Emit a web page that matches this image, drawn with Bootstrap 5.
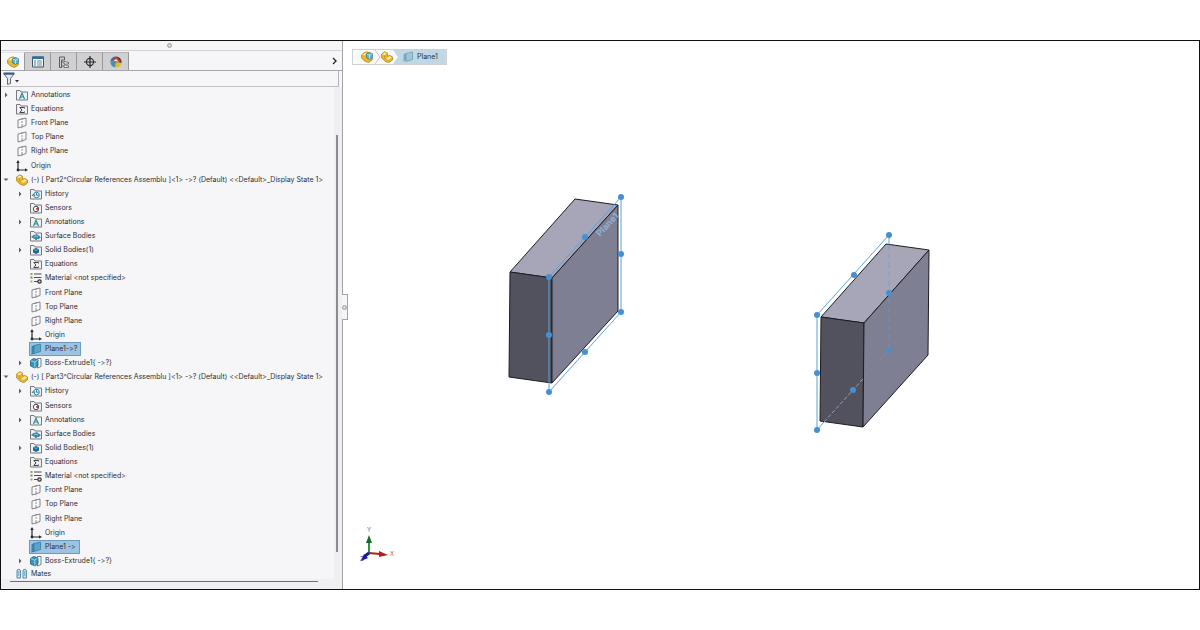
<!DOCTYPE html>
<html lang="en">
<head>
<meta charset="utf-8">
<meta name="viewport" content="width=device-width, initial-scale=1">
<title>Circular References Assembly</title>
<link href="https://cdn.jsdelivr.net/npm/bootstrap@5.3.0/dist/css/bootstrap.min.css" rel="stylesheet">
<style>
  body { font-family: Inter, "Open Sans", sans-serif; font-size: 7px; font-variant-ligatures: none; line-height: 12px; color: #2c2c30; background: #fff; }
  button { font: inherit; color: inherit; }
  .page { min-height: 100vh; padding: 40px 0; }
  .frame { border: 1px solid #111; }
  .side { width: 342px; background: #f6f6f8; border-right: 1px solid #a4a4a8; }
  .grip { height: 10px; padding-right: 4px; border-bottom: 1px solid #d2d2d4; }
  .knob { width: 5px; height: 5px; border: 1px solid #a0a0a4; background: #d6d6da; }
  .tabs { height: 20px; border-bottom: 1px solid #a8a8ac; }
  .tab { width: 26px; height: 18px; background: #d0d0d2; border: 0; border-right: 1px solid #98989c; border-top: 1px solid #b4b4b8; }
  .tab-on { width: 24px; background: #f8f8fa; border-top-color: #e4e4e6; }
  .more { width: 11px; height: 18px; }
  .filter { height: 16px; margin-right: 3px; border-bottom: 1px solid #c2c2c6; border-right: 1px solid #b4b4b8; }
  .filter input { height: 14px; outline: 0; }
  .track { width: 8px; background: #efeff1; padding: 48px 0 27px; }
  .thumb { width: 2px; background: #8c8c90; margin-left: 2px; }
  .tree { padding-top: 1px; }
  .tree li { white-space: nowrap; }
  .twist { width: 11px; height: 12px; margin-right: 4px; }
  .kid { padding-left: 14px; }
  .ico { width: 12px; height: 12px; flex: none; }
  .name { padding-left: 3px; }
  .picked { background: #9cc4e2; box-shadow: 0 0 0 1px #6c9cc0; padding-right: 3px; }
  .mates { height: 11px; }
  .hbar { height: 10px; background: #f0f0f2; padding: 2px 24px 0 9px; }
  .hbar div { height: 1px; background: #6e6e72; }
  .scene { min-width: 0; }
  .handle { left: -1px; top: 253px; width: 6px; height: 26px; background: #f6f6f8; border: 1px solid #a4a4a8; border-left: 0; }
  .crumbs { left: 9px; top: 8px; height: 16px; border: 1px solid #cfd2d4; background: #fafafa; }
  .crumbs a { color: #26343e; }
  .here { background: #c0d8e5; padding: 0 8px 0 9px; clip-path: polygon(0 0, 100% 0, 100% 100%, 0 100%, 5px 50%); }
  .ln { fill: none; stroke: #59a2de; stroke-width: 1; }
  .edge { stroke: #1c1c24; stroke-width: 1; stroke-linejoin: round; }
  .dots { fill: #4590d2; }
</style>
</head>
<body>
<svg class="d-none" aria-hidden="true">
  <symbol id="folder" viewBox="0 0 12 12"><path d="M.5 11V1.500h3.500l1 1.500h6.500V11z" fill="#f0f1f3" stroke="#77797d"/></symbol>
  <symbol id="note" viewBox="0 0 12 12"><use href="#folder"/><path d="M3.500 10 6 4.300 8.500 10M4.500 8h3" fill="none" stroke="#2b8b9b" stroke-width="1.200"/></symbol>
  <symbol id="sum" viewBox="0 0 12 12"><use href="#folder"/><path d="M8.500 5.500V4.500H3.800L6 7 3.800 9.500h4.700v-1" fill="none" stroke="#444"/></symbol>
  <symbol id="hist" viewBox="0 0 12 12"><use href="#folder"/><circle cx="6.500" cy="7" r="2.800" fill="#e8f6fa" stroke="#2f8ba2"/><path d="M6.500 5v2.200h2M2 8l1.500-2L5 8" fill="none" stroke="#2f7b92"/></symbol>
  <symbol id="sens" viewBox="0 0 12 12"><use href="#folder"/><circle cx="6" cy="7" r="2.700" fill="#fff" stroke="#4c4c50"/><path d="M6 7l2-2v3z" fill="#d33" stroke="#b33" stroke-width=".6"/></symbol>
  <symbol id="surf" viewBox="0 0 12 12"><use href="#folder"/><path d="M1.500 7 4 5l1 .5L6.500 4l1.500 1.500L10.500 7 8.500 9l-1-.5L6 10 4.500 8.500z" fill="#3187ad" stroke="#206485" stroke-width=".5"/><path d="M4 7q2-2 4 0" fill="none" stroke="#c6e9f5" stroke-width=".7"/></symbol>
  <symbol id="solid" viewBox="0 0 12 12"><use href="#folder"/><path d="M6 4 9 5.200V8.500L6 10 3 8.500V5.200z" fill="#1c6a94"/><path d="M3.500 5.400 6 6.500l2.500-1.100" fill="none" stroke="#83cbe4" stroke-width=".7"/></symbol>
  <symbol id="plane" viewBox="0 0 12 12"><path d="M2 3 10 1v7.500L2 11z" fill="#fbfbfc" stroke="#77777b" stroke-width=".9"/><path d="M6 1v10" stroke="#77777b" stroke-width=".8" stroke-dasharray="2 1"/></symbol>
  <symbol id="planeblue" viewBox="0 0 12 12"><path d="M1.500 3.500 4 2v7l-2.500 2z" fill="#3a85ad"/><path d="M4 2.500 10.500 1v7.500L4 10.500z" fill="#5ba5cb" stroke="#397ca1" stroke-width=".8"/><path d="M1.500 11l2.500-.7" stroke="#356f91"/></symbol>
  <symbol id="planepale" viewBox="0 0 12 12"><path d="M1.500 3.500 4 2v7l-2.500 2z" fill="#7fa9bf"/><path d="M4 2.500 10.500 1v7.500L4 10.500z" fill="#a0c6da" stroke="#6e9ab2" stroke-width=".8"/></symbol>
  <symbol id="origin" viewBox="0 0 12 12"><path d="M2 1.500V10h8" fill="none" stroke="#2a2a2e" stroke-width="1.200"/><path d="M.3 3 2 0l1.700 3zM9 8.300l3 1.700-3 1.500z" fill="#2a2a2e"/><circle cx="2" cy="10" r="1.400" fill="#2a2a2e"/></symbol>
  <symbol id="mat" viewBox="0 0 12 12"><path d="M4 2h7.500M4 5.500h7.500M4 9.500h4" stroke="#4c4c50" stroke-width="1.100"/><path d="M.5 1h2v2h-2z" fill="#b49d2b"/><path d="M.5 4.500h2v2h-2z" fill="#4c8f9c"/><path d="M.5 8.500h2v2h-2z" fill="#c0a734"/><circle cx="9.500" cy="9.500" r="1.700" fill="#ddd" stroke="#333" stroke-width="1.200"/></symbol>
  <symbol id="part" viewBox="0 0 12 12"><path d="M.6 3 3.600.8 6.400 2v3L9 4.500l2.500 1.500v3L8 11.500 4.500 10.500.6 7z" fill="#e9b62d" stroke="#a57c16" stroke-width=".7"/><path d="M1.200 3.200 3.700 1.500 5.800 2.400 3.500 4.300zM5 7.700 8.800 5.200l2 1.100L7.800 8.700z" fill="#fdeaa6"/><path d="M3.500 4.300V7L5 8" fill="none" stroke="#b88b1c" stroke-width=".7"/></symbol>
  <symbol id="assy" viewBox="0 0 12 12"><path d="M.5 4 3 1.800l3-1 3 1.500v3L6 7l2 1 3.300-1v2L7.500 11.500 3.500 10 .5 7z" fill="#e9b62d" stroke="#a57c16" stroke-width=".7"/><path d="M1.300 4 3.500 2.200l2-.6L4 4.500z" fill="#fdeaa6"/><path d="M5.500 3 8.500 1.500l3 1.200v4L8.500 8.200l-3-1.400z" fill="#64b6cc" stroke="#2f788c" stroke-width=".7"/><path d="M5.800 3.200 8.500 4.200l2.700-1.300M8.500 4.200V8" fill="none" stroke="#d5f1f6" stroke-width=".7"/></symbol>
  <symbol id="boss" viewBox="0 0 12 12"><path d="M7.500 1.500h3.500v8l-3.500 1.500z" fill="#f5fafc" stroke="#55636c" stroke-width=".8"/><path d="M.5 3.500 3.500 1.500 8 2.800v6L5 11 .5 9z" fill="#3795b8" stroke="#20607e" stroke-width=".8"/><path d="M.8 3.800 4.800 5 7.700 3M4.800 5v5.500" fill="none" stroke="#a9e0ee" stroke-width=".8"/></symbol>
  <symbol id="matesico" viewBox="0 0 12 12"><path d="M1 10V3a1.700 1.700 0 0 1 3.400 0v7zM7 10V3a1.700 1.700 0 0 1 3.400 0v7z" fill="#d8ecf4" stroke="#4a87a5"/><path d="M2.700 3v5M8.700 3v5" stroke="#4a87a5" stroke-width=".7"/></symbol>
  <symbol id="shut" viewBox="0 0 11 12"><path d="M4 3.500 6.500 6 4 8.500z" fill="#5c5c60"/></symbol>
  <symbol id="open" viewBox="0 0 11 12"><path d="M2.500 4.500h5L5 7z" fill="#5c5c60"/></symbol>
</svg>

<div class="page d-flex">
 <div class="frame d-flex flex-fill">
  <aside class="side d-flex flex-column flex-shrink-0">
    <div class="grip d-flex justify-content-center align-items-center"><span class="knob rounded-circle"></span></div>
    <div class="tabs d-flex align-items-end">
      <button class="tab tab-on p-0 d-flex align-items-center justify-content-center" aria-label="Feature tree"><svg class="ico"><use href="#assy"/></svg></button>
      <button class="tab p-0 d-flex align-items-center justify-content-center" aria-label="Properties"><svg class="ico" viewBox="0 0 12 12"><path d="M.5 1h11v10H.5z" fill="#f4f8fa" stroke="#43535f"/><path d="M0 .5h12v2.500H0z" fill="#2c719a"/><path d="M2 5h2M2 7h2M2 9h2" stroke="#2c82ad" stroke-width="1.200"/><path d="M5 5h5M5 7h5M5 9h5" stroke="#7d8a93"/></svg></button>
      <button class="tab p-0 d-flex align-items-center justify-content-center" aria-label="Configurations"><svg class="ico" viewBox="0 0 12 12"><path d="M1.500 11.500V1h5v3h-3v7.500zM3.500 6h2M3.500 10h2" fill="none" stroke="#5b5b60"/><path d="M6 5.500h2l.5.700h2V8H6zM6 9h2l.5.700h2v1.800H6z" fill="#eee" stroke="#5b5b60" stroke-width=".8"/></svg></button>
      <button class="tab p-0 d-flex align-items-center justify-content-center" aria-label="Dimensions"><svg class="ico" viewBox="0 0 12 12"><circle cx="6" cy="6" r="3.600" fill="none" stroke="#2b2b2f" stroke-width="1.100"/><path d="M6 0v12M0 6h12" stroke="#2b2b2f" stroke-width="1.200"/></svg></button>
      <button class="tab p-0 d-flex align-items-center justify-content-center" aria-label="Appearance"><svg class="ico" viewBox="0 0 12 12"><path d="M6 6 .5 5A5.600 5.600 0 0 1 6 .4z" fill="#3f6f9f"/><path d="M6 6V.4A5.600 5.600 0 0 1 11.500 7z" fill="#3c3c40"/><path d="M6 6l5.500 1A5.600 5.600 0 0 1 5 11.500z" fill="#e3bd27"/><path d="M6 6 5 11.500A5.600 5.600 0 0 1 .5 5z" fill="#3f91b4"/><path d="M2.500 4.500 6.500.6l4.500 5L6 6.500z" fill="#d83a2b"/><path d="M3.500 5 6 3 8.500 5.500z" fill="#fbeee8"/></svg></button>
      <button class="more btn p-0 border-0 ms-auto d-flex align-items-center" aria-label="More tabs"><svg width="8" height="10" viewBox="0 0 8 10"><path d="M2 2l3 3-3 3" fill="none" stroke="#2c2c30" stroke-width="1.400"/></svg></button>
    </div>
    <div class="filter d-flex align-items-center">
      <label for="filter" class="d-flex" aria-label="Filter"><svg width="18" height="13" viewBox="0 0 18 13"><path d="M3 2h10L9.500 6.500v5l-3 1v-6z" fill="#dfe9ef" stroke="#5c6973"/><path d="M2.500 1.500h11" stroke="#2b5f80" stroke-width="2"/><path d="M14 8h4l-2 2.500z" fill="#333"/></svg></label>
      <input id="filter" type="text" class="flex-fill border-0 bg-transparent p-0">
    </div>
    <div class="d-flex flex-fill">
      <div class="d-flex flex-column flex-fill overflow-hidden">
      <ul class="tree list-unstyled m-0 d-grid flex-fill">
        <li class="d-flex align-items-center"><button class="twist btn p-0 border-0 d-flex" aria-label="Expand"><svg width="11" height="12"><use href="#shut"/></svg></button><svg class="ico"><use href="#note"/></svg><span class="name">Annotations</span></li>
        <li class="d-flex align-items-center"><span class="twist"></span><svg class="ico"><use href="#sum"/></svg><span class="name">Equations</span></li>
        <li class="d-flex align-items-center"><span class="twist"></span><svg class="ico"><use href="#plane"/></svg><span class="name">Front Plane</span></li>
        <li class="d-flex align-items-center"><span class="twist"></span><svg class="ico"><use href="#plane"/></svg><span class="name">Top Plane</span></li>
        <li class="d-flex align-items-center"><span class="twist"></span><svg class="ico"><use href="#plane"/></svg><span class="name">Right Plane</span></li>
        <li class="d-flex align-items-center"><span class="twist"></span><svg class="ico"><use href="#origin"/></svg><span class="name">Origin</span></li>
        <li class="d-flex align-items-center"><button class="twist btn p-0 border-0 d-flex" aria-label="Collapse"><svg width="11" height="12"><use href="#open"/></svg></button><svg class="ico"><use href="#part"/></svg><span class="name">(-) [ Part2^Circular References Assemblu ]&lt;1&gt; -&gt;? (Default) &lt;&lt;Default&gt;_Display State 1&gt;</span></li>
        <li class="kid d-flex align-items-center"><button class="twist btn p-0 border-0 d-flex" aria-label="Expand"><svg width="11" height="12"><use href="#shut"/></svg></button><svg class="ico"><use href="#hist"/></svg><span class="name">History</span></li>
        <li class="kid d-flex align-items-center"><span class="twist"></span><svg class="ico"><use href="#sens"/></svg><span class="name">Sensors</span></li>
        <li class="kid d-flex align-items-center"><button class="twist btn p-0 border-0 d-flex" aria-label="Expand"><svg width="11" height="12"><use href="#shut"/></svg></button><svg class="ico"><use href="#note"/></svg><span class="name">Annotations</span></li>
        <li class="kid d-flex align-items-center"><span class="twist"></span><svg class="ico"><use href="#surf"/></svg><span class="name">Surface Bodies</span></li>
        <li class="kid d-flex align-items-center"><button class="twist btn p-0 border-0 d-flex" aria-label="Expand"><svg width="11" height="12"><use href="#shut"/></svg></button><svg class="ico"><use href="#solid"/></svg><span class="name">Solid Bodies(1)</span></li>
        <li class="kid d-flex align-items-center"><span class="twist"></span><svg class="ico"><use href="#sum"/></svg><span class="name">Equations</span></li>
        <li class="kid d-flex align-items-center"><span class="twist"></span><svg class="ico"><use href="#mat"/></svg><span class="name">Material &lt;not specified&gt;</span></li>
        <li class="kid d-flex align-items-center"><span class="twist"></span><svg class="ico"><use href="#plane"/></svg><span class="name">Front Plane</span></li>
        <li class="kid d-flex align-items-center"><span class="twist"></span><svg class="ico"><use href="#plane"/></svg><span class="name">Top Plane</span></li>
        <li class="kid d-flex align-items-center"><span class="twist"></span><svg class="ico"><use href="#plane"/></svg><span class="name">Right Plane</span></li>
        <li class="kid d-flex align-items-center"><span class="twist"></span><svg class="ico"><use href="#origin"/></svg><span class="name">Origin</span></li>
        <li class="kid d-flex align-items-center"><span class="twist"></span><span class="picked d-flex"><svg class="ico"><use href="#planeblue"/></svg><span class="name">Plane1-&gt;?</span></span></li>
        <li class="kid d-flex align-items-center"><button class="twist btn p-0 border-0 d-flex" aria-label="Expand"><svg width="11" height="12"><use href="#shut"/></svg></button><svg class="ico"><use href="#boss"/></svg><span class="name">Boss-Extrude1{ -&gt;?}</span></li>
        <li class="d-flex align-items-center"><button class="twist btn p-0 border-0 d-flex" aria-label="Collapse"><svg width="11" height="12"><use href="#open"/></svg></button><svg class="ico"><use href="#part"/></svg><span class="name">(-) [ Part3^Circular References Assemblu ]&lt;1&gt; -&gt;? (Default) &lt;&lt;Default&gt;_Display State 1&gt;</span></li>
        <li class="kid d-flex align-items-center"><button class="twist btn p-0 border-0 d-flex" aria-label="Expand"><svg width="11" height="12"><use href="#shut"/></svg></button><svg class="ico"><use href="#hist"/></svg><span class="name">History</span></li>
        <li class="kid d-flex align-items-center"><span class="twist"></span><svg class="ico"><use href="#sens"/></svg><span class="name">Sensors</span></li>
        <li class="kid d-flex align-items-center"><button class="twist btn p-0 border-0 d-flex" aria-label="Expand"><svg width="11" height="12"><use href="#shut"/></svg></button><svg class="ico"><use href="#note"/></svg><span class="name">Annotations</span></li>
        <li class="kid d-flex align-items-center"><span class="twist"></span><svg class="ico"><use href="#surf"/></svg><span class="name">Surface Bodies</span></li>
        <li class="kid d-flex align-items-center"><button class="twist btn p-0 border-0 d-flex" aria-label="Expand"><svg width="11" height="12"><use href="#shut"/></svg></button><svg class="ico"><use href="#solid"/></svg><span class="name">Solid Bodies(1)</span></li>
        <li class="kid d-flex align-items-center"><span class="twist"></span><svg class="ico"><use href="#sum"/></svg><span class="name">Equations</span></li>
        <li class="kid d-flex align-items-center"><span class="twist"></span><svg class="ico"><use href="#mat"/></svg><span class="name">Material &lt;not specified&gt;</span></li>
        <li class="kid d-flex align-items-center"><span class="twist"></span><svg class="ico"><use href="#plane"/></svg><span class="name">Front Plane</span></li>
        <li class="kid d-flex align-items-center"><span class="twist"></span><svg class="ico"><use href="#plane"/></svg><span class="name">Top Plane</span></li>
        <li class="kid d-flex align-items-center"><span class="twist"></span><svg class="ico"><use href="#plane"/></svg><span class="name">Right Plane</span></li>
        <li class="kid d-flex align-items-center"><span class="twist"></span><svg class="ico"><use href="#origin"/></svg><span class="name">Origin</span></li>
        <li class="kid d-flex align-items-center"><span class="twist"></span><span class="picked d-flex"><svg class="ico"><use href="#planeblue"/></svg><span class="name">Plane1 -&gt;</span></span></li>
        <li class="kid d-flex align-items-center"><button class="twist btn p-0 border-0 d-flex" aria-label="Expand"><svg width="11" height="12"><use href="#shut"/></svg></button><svg class="ico"><use href="#boss"/></svg><span class="name">Boss-Extrude1{ -&gt;?}</span></li>
      </ul>
      <div class="mates d-flex overflow-hidden flex-shrink-0"><span class="twist"></span><svg class="ico"><use href="#matesico"/></svg><span class="name">Mates</span></div>
      </div>
      <div class="track d-flex"><div class="thumb"></div></div>
    </div>
    <div class="hbar"><div></div></div>
  </aside>

  <main class="scene position-relative d-flex flex-fill">
    <svg class="w-100 h-100" viewBox="343 41 856 548" role="img" aria-label="Two extruded parts with reference planes">
      <g class="edge">
        <path d="M510 272 575 199 618 205 552 278z" fill="#a6a6b8"/>
        <path d="M510 272 552 278V383L509 377z" fill="#51525e"/>
        <path d="M552 278 618 205V311L552 383z" fill="#7e7f92"/>
      </g>
      <text transform="translate(600 237) rotate(-47)" font-size="9" font-weight="bold" fill="#8fc0e6" opacity=".8">Plane1</text>
      <path class="ln" d="M621 197 549 277V392L621 312z"/>
      <g class="dots"><circle cx="621" cy="197" r="3"/><circle cx="585" cy="237" r="3"/><circle cx="549" cy="277" r="3"/><circle cx="621" cy="254" r="3"/><circle cx="621" cy="312" r="3"/><circle cx="585" cy="352" r="3"/><circle cx="549" cy="392" r="3"/><circle cx="549" cy="335" r="3"/></g>

      <g class="edge">
        <path d="M821 317 886 244 929 250 864 323z" fill="#a6a6b8"/>
        <path d="M821 317 864 323 863 427 820 421z" fill="#51525e"/>
        <path d="M864 323 929 250 928 355 863 427z" fill="#7e7f92"/>
      </g>
      <path class="ln" d="M889 244V235L817 315V430L824 422"/>
      <path class="ln" d="M889 244V350L880 360" stroke-dasharray="6 3" opacity=".6"/>
      <path d="M824 422 863 379" fill="none" stroke="#93a5b5" stroke-dasharray="4 2"/>
      <g class="dots"><circle cx="889" cy="235" r="3"/><circle cx="854" cy="275" r="3"/><circle cx="817" cy="315" r="3"/><circle cx="889" cy="293" r="3"/><circle cx="889" cy="350" r="3" opacity=".7"/><circle cx="817" cy="373" r="3"/><circle cx="817" cy="430" r="3"/><circle cx="853" cy="390" r="3"/></g>

      <path d="M369 553V542" stroke="#2b9440" stroke-width="2"/><path d="M366 543 369 535 372 543z" fill="#176b2a"/>
      <path d="M369 553 380 554" stroke="#b81c1c" stroke-width="2"/><path d="M379 551 388 555 379 557z" fill="#b81c1c"/>
      <path d="M369 553 365 556" stroke="#1a1aa6" stroke-width="3"/><path d="M364 554 368 558 361 561z" fill="#1a1aa6"/>
      <text x="367" y="532" font-size="6" fill="#5d7d62">Y</text><text x="390" y="556" font-size="6" fill="#e05050">X</text>
      <text x="360" y="561" font-size="6" fill="#3434b8">Z</text>
    </svg>
    <nav class="crumbs position-absolute d-flex" aria-label="Selection">
      <a href="#" class="d-flex align-items-center ps-2" aria-label="Assembly"><svg class="ico"><use href="#assy"/></svg></a>
      <svg width="8" height="14" viewBox="0 0 8 14"><path d="M2 0l5 7-5 7" fill="none" stroke="#c4c4c8"/></svg>
      <a href="#" class="d-flex align-items-center" aria-label="Part"><svg class="ico"><use href="#part"/></svg></a>
      <a href="#" class="here d-flex align-items-center text-decoration-none"><svg class="ico"><use href="#planepale"/></svg><span class="name">Plane1</span></a>
    </nav>
    <button class="handle position-absolute p-0 d-flex align-items-center" aria-label="Collapse panel"><span class="knob rounded-circle"></span></button>
  </main>
 </div>
</div>
<script src="https://cdn.jsdelivr.net/npm/bootstrap@5.3.0/dist/js/bootstrap.bundle.min.js"></script>
</body>
</html>
